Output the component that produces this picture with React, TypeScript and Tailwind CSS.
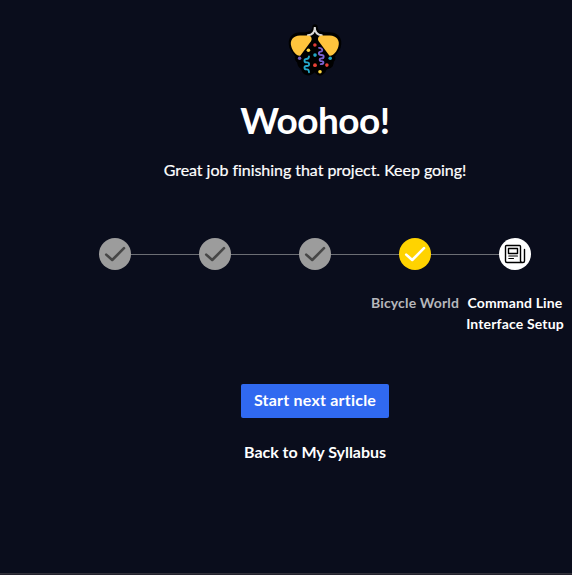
import React from "react";

function PartyBug() {
  return (
    <svg width="56" height="56" viewBox="0 0 56 56" fill="none" aria-hidden="true">
      <g stroke="#000" strokeWidth="5.4" strokeLinejoin="round" strokeLinecap="round" fill="#000">
        <path d="M21 11.5Q28 10.5 28 4Q28 10.5 35 11.5" />
        <path d="M11 33L5 24C2.5 15 8 12 14 12H42C48 12 53.5 15 51 24L45 33Q47 36 44 37.5Q45 43 40 43.5Q37 44 36 48Q33 52 30 48Q28 45.5 26 47Q23 51 19 49Q17 48 17 45Q12 42 13 38Q9 36 11 33Z" />
      </g>
      <path d="M20.8 12.2C25.5 12 27.8 9 27.8 4C27.8 9 30.1 12 34.8 12.2" stroke="#d9d9d9" strokeWidth="1.9" strokeLinecap="round" />
      <path d="M21 12.5H13C6 12.5 2.5 17.5 4.3 23.5C5.5 28 9.2 32.8 12.6 32.8C13.3 32.8 13.6 32.2 14 31.7L24 18.2C25.5 16 24.5 12.5 21 12.5Z" fill="#ffc43d" />
      <path d="M34.7 12.5H42.7C49.7 12.5 53.2 17.5 51.4 23.5C50.2 28 46.5 32.8 43.1 32.8C42.4 32.8 42.1 32.2 41.7 31.7L31.7 18.2C30.2 16 31.2 12.5 34.7 12.5Z" fill="#ffc43d" />
      <path d="M22 33.3C22 35.5 21 36 19.4 36C16.8 36 16.8 39.3 19.4 39.3H20C22.8 39.3 22.8 43 20 43H19.4C16.8 43 16.8 46.3 19.4 46.3H20C21.5 46.3 22 47.2 22 49.3" stroke="#24a9ca" strokeWidth="1.8" strokeLinecap="round" />
      <path d="M32 24.8C36 24.8 36 28.6 33.8 28.6C31.2 28.6 31.2 32 34 32H34.6C37.4 32 37.4 35.3 34.6 35.3C32 35.3 32 38.2 34.6 38.2C37.4 38.2 37 41.2 33.7 41.2" stroke="#7b62ce" strokeWidth="1.8" strokeLinecap="round" />
      <circle cx="27.9" cy="22" r="1.8" fill="#df3a37" />
      <circle cx="21.4" cy="27.2" r="1.8" fill="#ffd840" />
      <circle cx="28" cy="32.1" r="1.8" fill="#21a6c5" />
      <circle cx="12.6" cy="35.3" r="1.7" fill="#7460be" />
      <circle cx="43.2" cy="35.3" r="1.8" fill="#21a6c5" />
      <circle cx="28" cy="42.2" r="1.9" fill="#e74136" />
      <circle cx="39.9" cy="42.1" r="1.8" fill="#e74136" />
      <circle cx="33" cy="48.8" r="1.8" fill="#ffd840" />
    </svg>
  );
}

function Check({ current = false }: { current?: boolean }) {
  return (
    <div className={current ? "flex size-8 items-center justify-center rounded-full bg-[#ffd300] text-white" : "flex size-8 items-center justify-center rounded-full bg-[#9c9c9c] text-[#474747]"}>
      <svg width="32" height="32" viewBox="0 0 32 32" fill="none" stroke="currentColor" strokeWidth="2.6" strokeLinecap="round" strokeLinejoin="round">
        <path d="M7.2 16.6L13.2 22L25 10.2" />
      </svg>
    </div>
  );
}

function Article() {
  return (
    <div className="size-8 rounded-full bg-white text-black">
      <svg width="32" height="32" viewBox="0 0 32 32" fill="none" stroke="currentColor" strokeWidth="1.4" strokeLinecap="round" strokeLinejoin="round">
        <path d="M21.5 23V8.5Q21.5 7.5 20.5 7.5H7.5Q6.5 7.5 6.5 8.5V23Q6.5 24.5 8 24.5H24Q25.5 24.5 25.5 23V11.5M21.5 23Q21.5 24.5 23.5 24.5" />
        <path d="M9.5 10.5H18.5V15.5H9.5Z" />
        <path strokeWidth="1.1" d="M9.8 18H18.5M9.8 20.5H14.5" />
      </svg>
    </div>
  );
}

function Connector() {
  return <div className="h-px w-[68px] bg-[#6c6e74]" />;
}

export default function App() {
  return (
    <div className="flex h-[575px] w-full flex-col overflow-hidden bg-[#0a0d1c] font-['Lato',sans-serif] text-white">
      <main className="flex w-[630px] flex-1 shrink-0 flex-col items-center">
        <div className="mt-[23px] h-14"><PartyBug /></div>
        <h1 className="mt-[17px] h-12 text-[37px] leading-[48px] font-bold tracking-[-0.5px] whitespace-nowrap">Woohoo!</h1>
        <p className="mt-[14px] h-6 text-[16px] leading-6 tracking-[-0.04px] whitespace-nowrap [-webkit-text-stroke:0.2px_white]">Great job finishing that project. Keep going!</p>
        <div className="mt-14 flex items-center">
          <Check /><Connector /><Check /><Connector /><Check /><Connector /><Check current /><Connector /><Article />
        </div>
        <div className="mt-[22px] flex h-[42px] w-[500px] justify-end text-center text-[14px] leading-[21px] font-bold tracking-[0.15px]">
          <div className="w-[100px] whitespace-nowrap text-[#b6b7bb]">Bicycle World</div>
          <div className="w-[100px] whitespace-nowrap">Command Line<br />Interface Setup</div>
        </div>
        <button className="mt-[50px] flex h-[34px] w-[148px] items-center justify-center rounded-[2px] bg-[#3069f0] pb-0.5 text-[16px] font-bold tracking-[0.22px] whitespace-nowrap">Start next article</button>
        <a className="mt-[22px] text-[16px] leading-6 font-bold tracking-[-0.03px] whitespace-nowrap">Back to My Syllabus</a>
      </main>
      <div className="h-0.5 shrink-0 border-t border-[#303039] bg-[#24222d]" />
    </div>
  );
}
